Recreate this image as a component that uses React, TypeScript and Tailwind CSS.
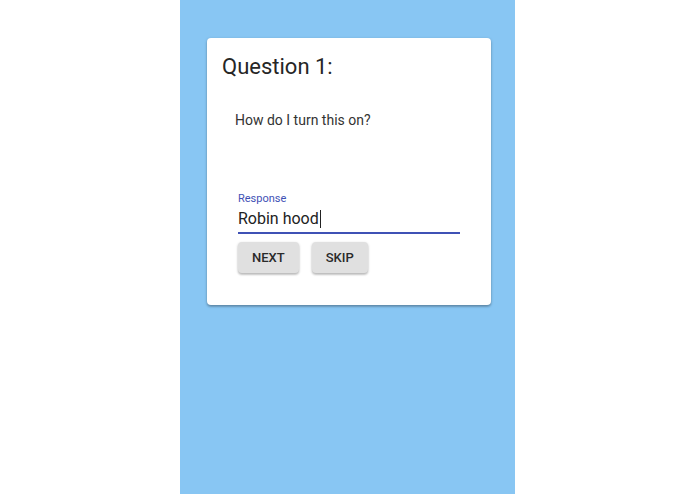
export default function App() {
  return (
    <div className="flex h-[494px] justify-center bg-white font-['Roboto',sans-serif]">
      <div className="h-full w-[335px] bg-[#88c6f3] pl-[27px] pt-[38px]">
        {/* Question card */}
        <div className="w-[284px] rounded-[4px] bg-white px-[15px] pb-[32px] pt-[16px] shadow-[0_1px_3px_rgba(0,0,0,0.25),0_2px_2px_rgba(0,0,0,0.14)]">
          <h1 className="text-[22px] leading-[26px] text-[#262626]">Question 1:</h1>
          <p className="ml-[13px] mt-[30px] text-[14px] leading-[20px] text-[#333]">
            How do I turn this on?
          </p>
          <div className="ml-[16px] mr-[16px] mt-[62px]">
            <label className="block text-[11px] leading-[13px] text-[#3f51b5]">Response</label>
            <div className="mt-[4px] flex items-center border-b-2 border-[#3f51b5] pb-[4px] text-[16px] leading-[19px] text-[#222]">
              <span>Robin hood</span>
              <span className="ml-[1px] inline-block h-[18px] w-px bg-[#222]" />
            </div>
            <div className="mt-[8px] flex gap-[13px]">
              <button className="h-[31px] rounded-[4px] bg-[#e0e0e0] px-[14px] text-[13px] font-medium uppercase text-[#2a2a2a] shadow-[0_1px_3px_rgba(0,0,0,0.2),0_2px_2px_rgba(0,0,0,0.14)]">
                Next
              </button>
              <button className="h-[31px] rounded-[4px] bg-[#e0e0e0] px-[14px] text-[13px] font-medium uppercase text-[#2a2a2a] shadow-[0_1px_3px_rgba(0,0,0,0.2),0_2px_2px_rgba(0,0,0,0.14)]">
                Skip
              </button>
            </div>
          </div>
        </div>
      </div>
    </div>
  );
}
